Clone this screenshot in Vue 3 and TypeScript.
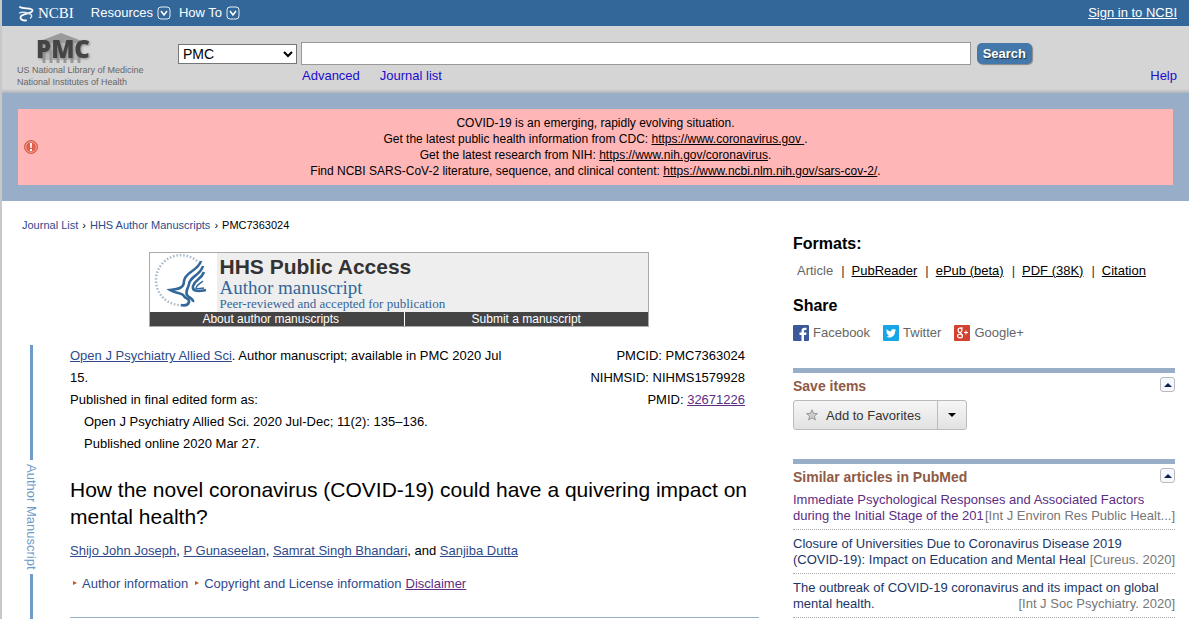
<script setup lang="ts">
import { ref } from 'vue'

interface Notice { text: string; url: string; tail: string }
interface Related { title: string; source: string; visited: boolean }

const notices: Notice[] = [
  { text: 'Get the latest public health information from CDC:', url: 'https://www.coronavirus.gov ', tail: '.' },
  { text: 'Get the latest research from NIH:', url: 'https://www.nih.gov/coronavirus', tail: '.' },
  { text: 'Find NCBI SARS-CoV-2 literature, sequence, and clinical content:', url: 'https://www.ncbi.nlm.nih.gov/sars-cov-2/', tail: '.' },
]

const formats: string[] = ['PubReader', 'ePub (beta)', 'PDF (38K)', 'Citation']

const related: Related[] = [
  { title: 'Immediate Psychological Responses and Associated Factors during the Initial Stage of the 201', source: '[Int J Environ Res Public Healt...]', visited: true },
  { title: 'Closure of Universities Due to Coronavirus Disease 2019 (COVID-19): Impact on Education and Mental Heal', source: '[Cureus. 2020]', visited: false },
  { title: 'The outbreak of COVID-19 coronavirus and its impact on global mental health.', source: '[Int J Soc Psychiatry. 2020]', visited: false },
]

const database = ref('PMC')
const term = ref('')
const saveOpen = ref(true)
const similarOpen = ref(true)
</script>

<template>
  <div class="page">
    <nav class="topbar" aria-label="NCBI">
      <a class="ncbi" href="#">
        <svg width="16" height="18" viewBox="0 0 16 18" aria-hidden="true">
          <g fill="none" stroke="#fff" stroke-linecap="round">
            <path d="M2 3C5 5.500 14.500 3 14.500 6.500C14.500 10 2.500 9.500 2.500 13.500C2.500 15.500 5 16.500 8 16.500" stroke-width="1.800" />
            <path d="M1.500 9C4 7.500 8 8.500 11 9.500C14 10.500 14.500 12.500 12.500 14" stroke-width="1.400" stroke="#dbe7f2" />
          </g>
        </svg>
        <span>NCBI</span>
      </a>
      <button v-for="item in ['Resources', 'How To']" :key="item" class="menu" type="button">
        {{ item }}
        <svg width="14" height="14" viewBox="0 0 14 14" aria-hidden="true">
          <rect x="1" y="1" width="12" height="12" rx="3" fill="none" stroke="#e8f0f8" />
          <path d="M4 5l3 4 3-4" fill="none" stroke="#fff" stroke-width="1.500" />
        </svg>
      </button>
      <a class="signin" href="#">Sign in to NCBI</a>
    </nav>

    <header class="header">
      <a class="brand" href="#">
        <svg class="pmc" width="64" height="32" viewBox="0 0 64 32" role="img" aria-label="PMC">
          <path d="M27 1L48 9V12H6V9z" fill="#9a9a9a" />
          <path d="M8 11h38v17H8z" fill="#b8b8b8" />
          <path d="M10 18v13M17 18v13M24 18v13M31 18v13M38 18v13M45 18v13" stroke="#989898" stroke-width="3" />
          <text x="2" y="26" class="pmc-text">PMC</text>
        </svg>
        <span>US National Library of Medicine</span>
        <span>National Institutes of Health</span>
      </a>
      <form class="search" @submit.prevent>
        <div class="search-row">
          <select v-model="database" aria-label="Search database">
            <option>PMC</option>
            <option>PubMed</option>
          </select>
          <input v-model="term" type="text" aria-label="Search term">
          <button type="submit">Search</button>
        </div>
        <div class="search-links">
          <a href="#">Advanced</a>
          <a href="#">Journal list</a>
          <a class="help" href="#">Help</a>
        </div>
      </form>
    </header>

    <section class="alert-band">
      <div class="alert">
        <svg width="14" height="14" viewBox="0 0 14 14" aria-hidden="true">
          <circle cx="7" cy="7" r="6.500" fill="#e0604c" stroke="#d0604f" />
          <circle cx="7" cy="7" r="5.300" fill="none" stroke="#f3a898" />
          <path d="M6 3h2l-.3 5H6.300zM6 9h2v2H6z" fill="#fff" />
        </svg>
        <div class="alert-text">
          <p>COVID-19 is an emerging, rapidly evolving situation.</p>
          <p v-for="n in notices" :key="n.url">{{ n.text }} <a href="#">{{ n.url }}</a>{{ n.tail }}</p>
        </div>
      </div>
    </section>

    <main class="content">
      <div class="left">
        <nav class="crumbs" aria-label="Breadcrumb">
          <a href="#">Journal List</a><span class="sep">›</span><a href="#">HHS Author Manuscripts</a><span class="sep">›</span><span>PMC7363024</span>
        </nav>

        <section class="hhs">
          <div class="hhs-top">
            <svg width="67" height="59" viewBox="0 0 67 59" aria-hidden="true">
              <rect width="67" height="59" fill="#fff" />
              <path d="M47 8A25 25 0 1 0 34 52" fill="none" stroke="#a9bccd" stroke-width="2.500" stroke-dasharray="1.600 1.800" />
              <g fill="none" stroke="#336699" stroke-width="2.600">
                <path d="M51 8C48 18 35 19 34 28C34 35 29 36 20 37C26 41 32 39 34 43C35 46 40 45 39 49C38 52 35 53 31 52" />
                <path d="M53 13C50 23 40 23 39 31C38 36 35 38 37 42C39 45 44 46 43 49" />
                <path d="M54 19C51 27 45 26 43 33C42 38 46 39 56 37" />
              </g>
              <path d="M53 28C50 31 46 32 46 36L54 35" fill="none" stroke="#336699" stroke-width="1.500" />
            </svg>
            <div class="hhs-titles">
              <strong>HHS Public Access</strong>
              <span class="hhs-sub">Author manuscript</span>
              <span class="hhs-note">Peer-reviewed and accepted for publication</span>
            </div>
          </div>
          <div class="hhs-links">
            <a class="about" href="#">About author manuscripts</a>
            <a href="#">Submit a manuscript</a>
          </div>
        </section>

        <div class="body">
          <aside class="rail">
            <i class="rail-first"></i>
            <span>Author Manuscript</span>
            <i class="rail-rest"></i>
          </aside>
          <article class="article">
            <div class="meta">
              <div class="cite">
                <p><a href="#">Open J Psychiatry Allied Sci</a>. Author manuscript; available in PMC 2020 Jul 15.</p>
                <p>Published in final edited form as:</p>
                <p class="indent">Open J Psychiatry Allied Sci. 2020 Jul-Dec; 11(2): 135–136.</p>
                <p class="indent">Published online 2020 Mar 27.</p>
              </div>
              <div class="ids">
                <p>PMCID: PMC7363024</p>
                <p>NIHMSID: NIHMS1579928</p>
                <p>PMID: <a class="visited" href="#">32671226</a></p>
              </div>
            </div>
            <h1>How the novel coronavirus (COVID-19) could have a quivering impact on mental health?</h1>
            <p class="authors"><a href="#">Shijo John Joseph</a>, <a href="#">P Gunaseelan</a>, <a href="#">Samrat Singh Bhandari</a>, and <a href="#">Sanjiba Dutta</a></p>
            <p class="info">
              <a class="toggle" href="#">Author information</a>
              <a class="toggle" href="#">Copyright and License information</a>
              <a class="visited" href="#">Disclaimer</a>
            </p>
          </article>
        </div>
      </div>

      <aside class="right">
        <h2>Formats:</h2>
        <ul class="formats">
          <li>Article</li>
          <li v-for="f in formats" :key="f"><a href="#">{{ f }}</a></li>
        </ul>
        <h2>Share</h2>
        <div class="share">
          <a href="#">
            <svg width="16" height="16" viewBox="0 0 16 16" aria-hidden="true">
              <rect width="16" height="16" rx="1" fill="#3b5998" />
              <path d="M8.500 16V10H6.500V7.500H8.500V6C8.500 3.800 9.600 2.700 11.600 2.700H13.500V5H12.300C11.300 5 11 5.400 11 6.200V7.500H13.500L13.200 10H11V16z" fill="#fff" />
            </svg>Facebook
          </a>
          <a href="#">
            <svg width="16" height="16" viewBox="0 0 16 16" aria-hidden="true">
              <rect width="16" height="16" rx="1" fill="#16a5e6" />
              <path d="M13.200 5L12.100 5.300L12.900 4.200L11.600 4.600C10.100 3.300 7.900 4.500 8.200 6.400C6.300 6.300 4.900 5.500 3.700 4.200C3 5.500 3.500 6.600 4.300 7.200L3.400 7C3.500 8.100 4.200 8.900 5.200 9.200H4.300C4.600 10 5.300 10.600 6.200 10.700C5.300 11.400 4.200 11.600 3 11.500C7.300 14 12.200 11.300 12.100 6.200z" fill="#fff" />
            </svg>Twitter
          </a>
          <a href="#">
            <svg width="16" height="16" viewBox="0 0 16 16" aria-hidden="true">
              <rect width="16" height="16" rx="1" fill="#d3412f" />
              <g fill="none" stroke="#fff" stroke-width="1.200">
                <ellipse cx="6" cy="5.200" rx="1.900" ry="2.200" />
                <ellipse cx="6" cy="11" rx="2.500" ry="1.900" />
                <path d="M6 3h3M6.500 7.400C5.500 8 8 8.500 8.300 10.500" />
                <path d="M10 7.500h4M12 5.500v4" stroke-width="1" />
              </g>
            </svg>Google+
          </a>
        </div>

        <section class="portlet save">
          <div class="portlet-head">
            <h3>Save items</h3>
            <button class="collapse" type="button" aria-label="Toggle save items" @click="saveOpen = !saveOpen"></button>
          </div>
          <div v-if="saveOpen" class="favorites">
            <button type="button">
              <svg width="12" height="12" viewBox="0 0 12 12" aria-hidden="true">
                <path d="M6 .8l1.500 3.500 3.900.3-3 2.500 1 3.800L6 8.900l-3.400 2 1-3.800-3-2.500 3.900-.3z" fill="#ccc" stroke="#999" />
              </svg>
              Add to Favorites
            </button>
            <button class="more" type="button" aria-label="More options"></button>
          </div>
        </section>

        <section class="portlet">
          <div class="portlet-head">
            <h3>Similar articles in PubMed</h3>
            <button class="collapse" type="button" aria-label="Toggle similar articles" @click="similarOpen = !similarOpen"></button>
          </div>
          <ul v-if="similarOpen" class="similar">
            <li v-for="r in related" :key="r.title">
              <a href="#" :class="{ seen: r.visited }">{{ r.title }}</a>
              <span>{{ r.source }}</span>
            </li>
          </ul>
        </section>
      </aside>
    </main>
  </div>
</template>

<style>
body {
  margin: 0;
  background: #fff;
}
</style>

<style scoped>
.page {
  display: flex;
  flex-direction: column;
  box-sizing: border-box;
  min-height: 100vh;
  border-left: 2px solid #c8c8c8;
  font: 13px/16px "Liberation Sans", Arial, sans-serif;
  color: #000;
}
p, h1, h2, h3, ul {
  margin: 0;
  padding: 0;
}
ul {
  list-style: none;
}
button, input, select {
  font-family: inherit;
}
.topbar {
  display: flex;
  align-items: center;
  height: 26px;
  padding: 0 12px 0 16px;
  background: #336699;
}
.ncbi {
  display: flex;
  align-items: center;
  gap: 4px;
  margin-right: 17px;
  color: #fff;
  font: 15px/18px "Liberation Serif", serif;
  text-decoration: none;
}
.menu {
  display: flex;
  align-items: center;
  gap: 4px;
  margin-right: 8px;
  padding: 0;
  border: 0;
  background: none;
  color: #fff;
  font-size: 13px;
  line-height: 16px;
}
.signin {
  margin-left: auto;
  color: #fff;
  font-size: 13px;
}
.header {
  display: flex;
  box-sizing: border-box;
  height: 67px;
  padding: 6px 12px 0 15px;
  background: linear-gradient(#d5d5d5 63px, #b0b4b9);
}
.brand {
  display: flex;
  flex-direction: column;
  width: 161px;
  color: #666;
  font-size: 9px;
  line-height: 12px;
  text-decoration: none;
}
.pmc {
  overflow: visible;
  margin-left: 17px;
}
.pmc-text {
  font: 800 24px "Open Sans", sans-serif;
  fill: #444;
  filter: drop-shadow(1px 1px 1px #888);
}
.search {
  flex: 1;
  padding-top: 10px;
}
.search-row {
  display: flex;
  align-items: center;
  padding-right: 145px;
}
.search-row select {
  width: 119px;
  height: 20px;
  margin-right: 4px;
  padding: 0;
  border: 1px solid #767676;
  background: #fff;
  font-size: 14px;
}
.search-row input {
  box-sizing: border-box;
  flex: 1;
  min-width: 0;
  height: 23px;
  margin-right: 6px;
  border: 1px solid #999;
  background: #fff;
}
.search-row button {
  height: 21px;
  padding: 0 6px;
  border: 0;
  border-radius: 5px;
  background: #4477aa;
  box-shadow: 1px 1px 1px #888;
  color: #fff;
  font-size: 13px;
  font-weight: bold;
  text-shadow: 1px 1px 1px #234;
}
.search-links {
  display: flex;
  gap: 20px;
  margin-top: 3px;
  padding-left: 124px;
}
.search-links a {
  color: #1a0dcc;
  text-decoration: none;
}
.search-links .help {
  margin-left: auto;
}
.alert-band {
  padding: 16px;
  background: #98aec8;
}
.alert {
  display: flex;
  align-items: center;
  padding: 6px 20px 6px 6px;
  background: #ffb6b6;
}
.alert-text {
  flex: 1;
  font-size: 12px;
  text-align: center;
}
.alert-text a {
  color: #000;
  white-space: pre;
}
.content {
  display: flex;
  flex: 1;
  gap: 34px;
  padding: 0 14px 0 20px;
}
.left {
  display: flex;
  flex: 1;
  flex-direction: column;
  min-width: 0;
}
.crumbs {
  display: flex;
  padding-top: 16px;
  font-size: 11px;
}
.crumbs a {
  color: #2f4a8b;
  text-decoration: none;
}
.crumbs .sep {
  margin: 0 4px;
}
.hhs {
  align-self: center;
  box-sizing: border-box;
  width: 500px;
  margin: 19px 0 18px 16px;
  border: 1px solid #aaa;
  background: #eee;
}
.hhs-top {
  display: flex;
}
.hhs-titles {
  display: flex;
  flex-direction: column;
  padding: 3px 0 0 3px;
  color: #336699;
}
.hhs-titles strong {
  color: #333;
  font-size: 21px;
  line-height: 22px;
}
.hhs-sub {
  font: 19px/19px "Liberation Serif", serif;
}
.hhs-note {
  font: 13px/14px "Liberation Serif", serif;
}
.hhs-links {
  display: flex;
  background: #444;
}
.hhs-links a {
  flex: 1;
  color: #fff;
  font-size: 12px;
  line-height: 14px;
  text-align: center;
  text-decoration: none;
}
.hhs-links .about {
  padding-right: 12px;
  border-right: 1px solid #fff;
}
.body {
  display: flex;
  flex: 1;
}
.rail {
  display: flex;
  flex-direction: column;
  align-items: center;
  width: 18px;
  margin-right: 30px;
  color: #6f9bc8;
}
.rail i {
  width: 3px;
  background: #6f9bc8;
}
.rail-first {
  height: 115px;
}
.rail-rest {
  flex: 1;
}
.rail span {
  margin: 4px 0;
  font-size: 13px;
  line-height: 18px;
  writing-mode: vertical-rl;
}
.article {
  flex: 1;
  border-bottom: 1px solid #98aec8;
  align-self: flex-start;
}
.article a {
  color: #2f4a8b;
}
.article a.visited {
  color: #5c2d83;
}
.meta {
  display: flex;
  justify-content: space-between;
  padding-right: 14px;
  line-height: 22px;
}
.cite {
  max-width: 450px;
}
.indent {
  padding-left: 14px;
}
.ids {
  text-align: right;
}
h1 {
  margin-top: 21px;
  font-size: 21px;
  font-weight: normal;
  line-height: 27px;
}
.authors {
  margin-top: 13px;
}
.info {
  display: flex;
  gap: 4px;
  margin: 17px 0 25px;
}
.info .toggle {
  text-decoration: none;
}
.toggle::before {
  display: inline-block;
  margin: 0 5px 3px 3px;
  border: solid transparent;
  border-width: 2px 0 2px 4px;
  border-left-color: #c0562a;
  content: "";
}
.right {
  width: 382px;
  padding-top: 33px;
}
h2 {
  font-size: 16px;
  line-height: 20px;
}
.formats {
  display: flex;
  margin: 8px 0 16px 4px;
  line-height: 18px;
}
.formats li {
  color: #666;
}
.formats a {
  color: #000;
}
.formats li + li::before {
  margin: 0 7px 0 8px;
  color: #333;
  content: "|";
}
.share {
  display: flex;
  gap: 13px;
  margin: 9px 0 27px;
}
.share a {
  display: flex;
  gap: 4px;
  color: #666;
  text-decoration: none;
}
.portlet {
  border-top: 5px solid #98aec8;
}
.save {
  margin-bottom: 29px;
}
.portlet-head {
  display: flex;
  justify-content: space-between;
  padding-top: 4px;
}
h3 {
  color: #8f5a44;
  font-size: 14px;
  line-height: 18px;
}
.collapse {
  display: grid;
  place-items: center;
  width: 15px;
  height: 15px;
  padding: 0;
  border: 1px solid #bbb;
  border-radius: 3px;
  background: #f4f7fd;
}
.collapse::before, .more::before {
  border: solid transparent;
  border-width: 0 4px 4px;
  border-bottom-color: #0e1f4d;
  content: "";
}
.favorites {
  display: flex;
  width: fit-content;
  height: 28px;
  margin-top: 5px;
  border: 1px solid #bbb;
  border-radius: 3px;
  background: linear-gradient(#f6f6f6, #e2e2e2);
}
.favorites button {
  display: flex;
  align-items: center;
  gap: 8px;
  padding: 0 16px 0 12px;
  border: 0;
  background: none;
  color: #333;
  font-size: 13px;
}
.favorites .more {
  padding: 0 10px;
  border-left: 1px solid #bbb;
}
.favorites .more::before {
  border-width: 4px 4px 0;
  border-top-color: #000;
}
.similar {
  padding-top: 6px;
}
.similar li {
  display: flow-root;
  padding-bottom: 5px;
  border-bottom: 1px dotted #aaa;
}
.similar li + li {
  padding-top: 6px;
}
.similar a {
  color: #1c3668;
  text-decoration: none;
}
.similar a.seen {
  color: #5c2d83;
}
.similar span {
  float: right;
  color: #777;
}
</style>
